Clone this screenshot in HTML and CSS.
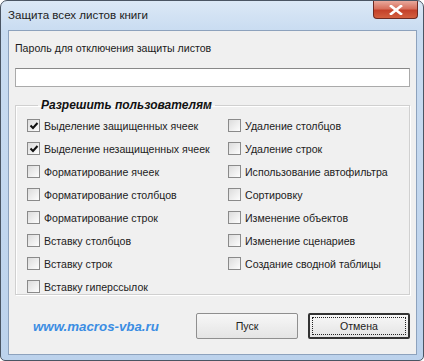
FILE: index.html
```html
<!DOCTYPE html>
<html lang="ru">
<head>
  <meta charset="UTF-8" />
  <title>Защита всех листов книги</title>
  <link rel="stylesheet" href="styles.css">
</head>
<body>
<div class="window">
  <div class="titlebar">
    <span class="title">Защита всех листов книги</span>
    <span class="close">
      <svg width="14" height="10" viewBox="0 0 14 10"><path d="M2 1 L12 9 M12 1 L2 9" stroke="#fff" stroke-width="2.6" stroke-linecap="square"/></svg>
    </span>
  </div>
  <div class="client">
    <div class="label">Пароль для отключения защиты листов</div>
    <div class="textbox"></div>
    <fieldset class="group">
      <legend>Разрешить пользователям</legend>
      <div class="columns">
        <div class="col">
          <div class="check on"><span class="box"><svg width="10" height="10" viewBox="0 0 10 10"><path d="M1.5 4.5 L4 7 L8.5 2" fill="none" stroke="#111" stroke-width="2"/></svg></span>Выделение защищенных ячеек</div>
          <div class="check on"><span class="box"><svg width="10" height="10" viewBox="0 0 10 10"><path d="M1.5 4.5 L4 7 L8.5 2" fill="none" stroke="#111" stroke-width="2"/></svg></span>Выделение незащищенных ячеек</div>
          <div class="check"><span class="box"></span>Форматирование ячеек</div>
          <div class="check"><span class="box"></span>Форматирование столбцов</div>
          <div class="check"><span class="box"></span>Форматирование строк</div>
          <div class="check"><span class="box"></span>Вставку столбцов</div>
          <div class="check"><span class="box"></span>Вставку строк</div>
          <div class="check"><span class="box"></span>Вставку гиперссылок</div>
        </div>
        <div class="col">
          <div class="check"><span class="box"></span>Удаление столбцов</div>
          <div class="check"><span class="box"></span>Удаление строк</div>
          <div class="check"><span class="box"></span>Использование автофильтра</div>
          <div class="check"><span class="box"></span>Сортировку</div>
          <div class="check"><span class="box"></span>Изменение объектов</div>
          <div class="check"><span class="box"></span>Изменение сценариев</div>
          <div class="check"><span class="box"></span>Создание сводной таблицы</div>
        </div>
      </div>
    </fieldset>
    <div class="footer">
      <span class="site">www.macros-vba.ru</span>
      <div class="buttons">
        <button class="btn">Пуск</button>
        <button class="btn default"><span class="focus">Отмена</span></button>
      </div>
    </div>
  </div>
</div>
</body>
</html>
```

FILE: styles.css
```css
body {
  margin: 0;
  background: #fff;
  font-family: "Liberation Sans", Arial, sans-serif;
  font-size: 10.6px;
  color: #1a1a1a;
}
.window {
  width: 422px;
  height: 359px;
  border: 1px solid #4a5563;
  border-radius: 7px 7px 5px 5px;
  background: linear-gradient(180deg, #dbe8f6 0px, #c9dcf1 30px, #bcd2ec 100%);
  display: flex;
  flex-direction: column;
  overflow: hidden;
}
.titlebar {
  height: 29px;
  display: flex;
  justify-content: space-between;
  align-items: flex-start;
}
.title {
  font-size: 11.6px;
  color: #222;
  margin: 7px 0 0 7px;
}
.close {
  width: 43px;
  height: 17px;
  margin-right: 5px;
  border: 1px solid #6d2a22;
  border-top: 0;
  border-radius: 0 0 4px 4px;
  background: linear-gradient(180deg, #e9a99c 0%, #d7705d 45%, #c4412a 55%, #d35f3f 100%);
  display: flex;
  justify-content: center;
  align-items: center;
}
.client {
  flex: 1;
  margin: 0 6px 5px 7px;
  background: #f0f0f0;
  border: 1px solid #8da2bd;
  padding: 0 6px;
  display: flex;
  flex-direction: column;
}
.label {
  margin-top: 11px;
  height: 14px;
}
.textbox {
  margin-top: 12px;
  height: 17px;
  background: #fff;
  border: 1px solid #aaa;
  border-top-color: #888;
}
.group {
  margin: 11px 0 0 0;
  padding: 2px 0 0 11px;
  height: 193px;
  border: 1px solid #d0d0d0;
  border-radius: 0;
  box-shadow: inset 1px 1px 0 #fff, 1px 1px 0 #fff;
}
.group legend {
  padding: 0 3px;
  margin-left: 11px;
  font-weight: bold;
  font-style: italic;
  font-size: 12px;
  color: #111;
}
.columns {
  display: flex;
}
.col {
  display: flex;
  flex-direction: column;
}
.col:first-child {
  width: 201px;
}
.check {
  height: 23px;
  display: flex;
  align-items: center;
  color: #222;
}
.box {
  width: 11px;
  height: 11px;
  border: 1px solid #8a8a8a;
  background: linear-gradient(135deg, #dcdcdc, #fdfdfd);
  margin-right: 4px;
  display: flex;
  justify-content: center;
  align-items: center;
}
.footer {
  margin-top: 18px;
  display: flex;
  justify-content: space-between;
  align-items: center;
}
.site {
  margin-left: 18px;
  font-weight: bold;
  font-style: italic;
  font-size: 13.3px;
  color: #3b8de3;
}
.buttons {
  display: flex;
  gap: 10px;
}
.btn {
  width: 102px;
  height: 26px;
  font-family: "Liberation Sans", Arial, sans-serif;
  font-size: 10.6px;
  color: #222;
  background: linear-gradient(180deg, #f7f7f7, #e4e4e4);
  border: 1px solid #8f8f8f;
  border-radius: 2px;
  padding: 0;
}
.btn.default {
  border: 2px solid #333;
  padding: 2px;
}
.focus {
  display: flex;
  height: 100%;
  justify-content: center;
  align-items: center;
  border: 1px dotted #222;
  box-sizing: border-box;
}
```
